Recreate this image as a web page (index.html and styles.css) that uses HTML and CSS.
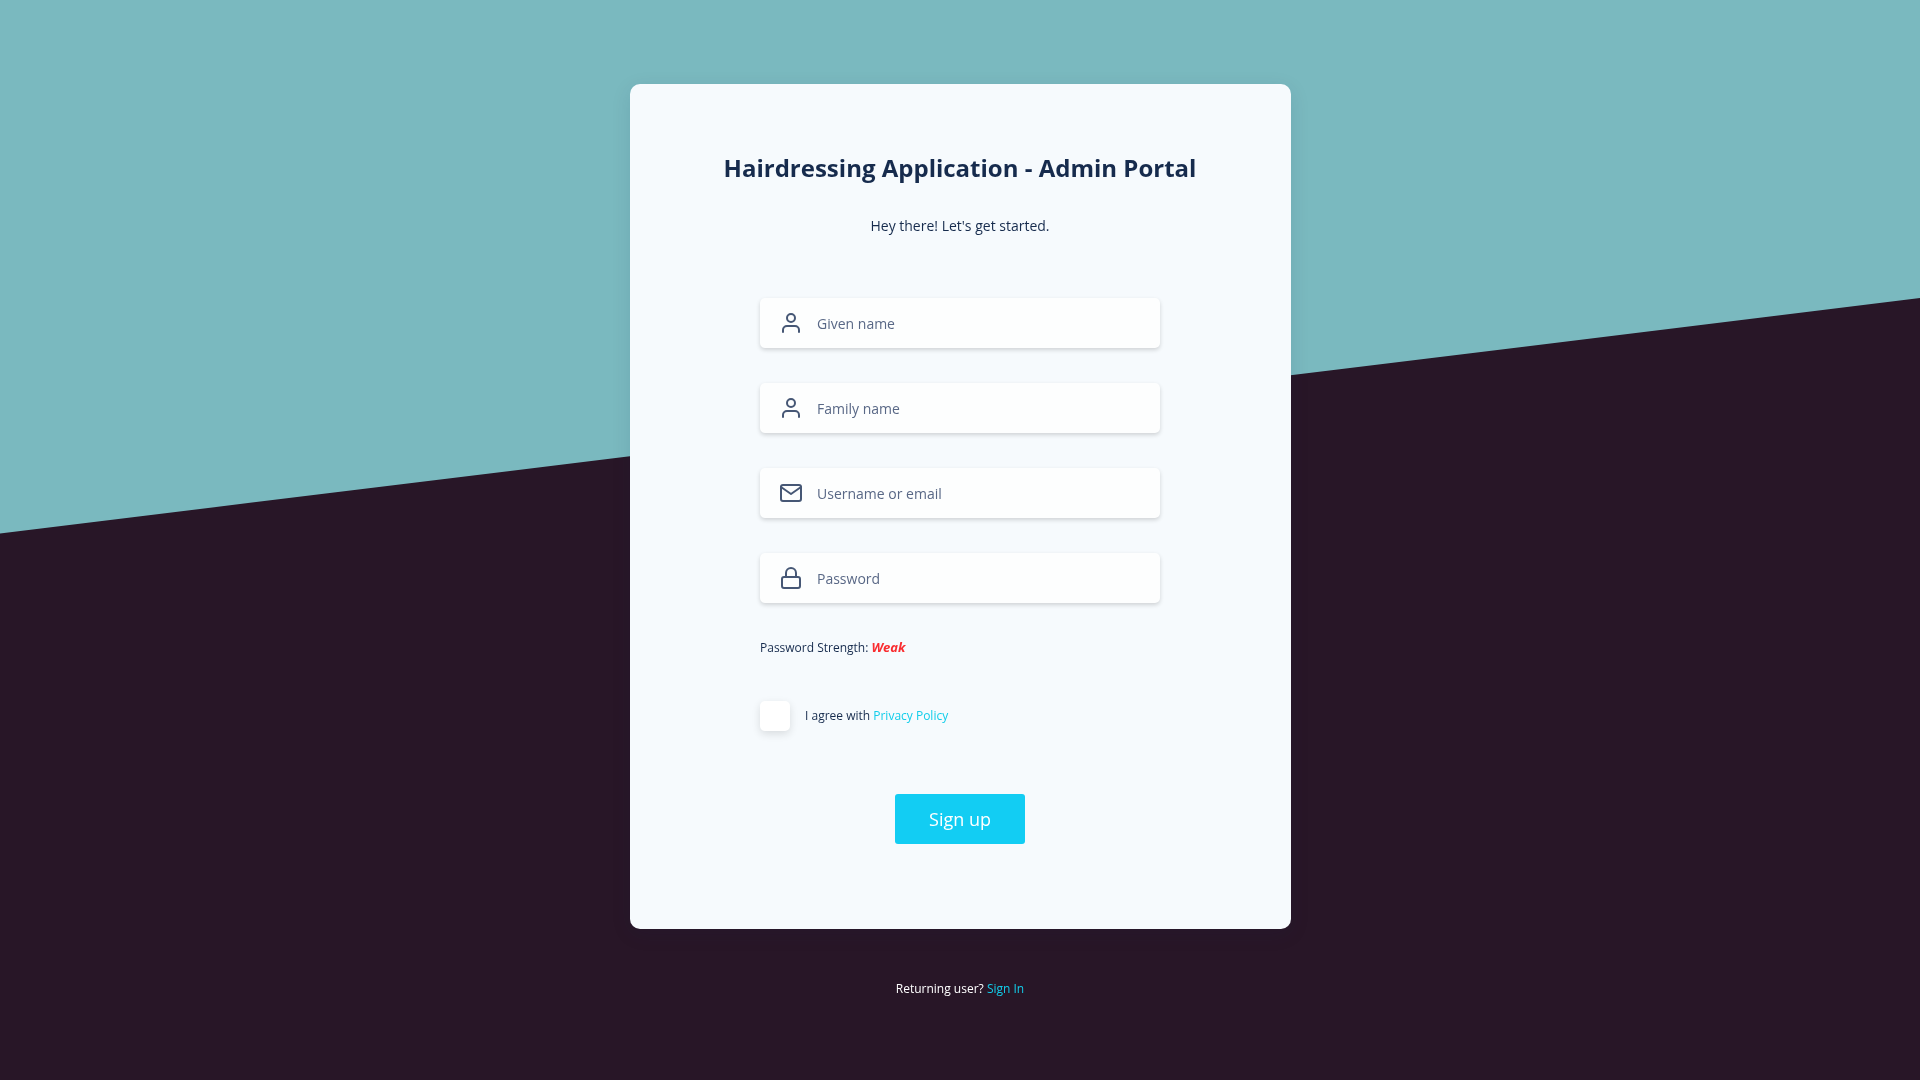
FILE: index.html
```
<!DOCTYPE html>
<html lang="en">
<head>
<meta charset="utf-8">
<meta name="viewport" content="width=device-width, initial-scale=1">
<title>Hairdressing Application - Admin Portal</title>
<link rel="stylesheet" href="styles.css">
</head>
<body>
<main class="page">
  <section class="card">
    <h1 class="title">Hairdressing Application - Admin Portal</h1>
    <p class="intro">Hey there! Let's get started.</p>
    <form class="form">
      <label class="field">
        <svg class="icon" viewBox="0 0 24 24" aria-hidden="true"><path d="M20 21v-2a4 4 0 0 0-4-4H8a4 4 0 0 0-4 4v2"/><circle cx="12" cy="7" r="4"/></svg>
        <input class="input" type="text" placeholder="Given name" aria-label="Given name">
      </label>
      <label class="field">
        <svg class="icon" viewBox="0 0 24 24" aria-hidden="true"><path d="M20 21v-2a4 4 0 0 0-4-4H8a4 4 0 0 0-4 4v2"/><circle cx="12" cy="7" r="4"/></svg>
        <input class="input" type="text" placeholder="Family name" aria-label="Family name">
      </label>
      <label class="field">
        <svg class="icon" viewBox="0 0 24 24" aria-hidden="true"><path d="M4 4h16a2 2 0 0 1 2 2v12a2 2 0 0 1-2 2H4a2 2 0 0 1-2-2V6a2 2 0 0 1 2-2z"/><path d="M22 6l-10 7L2 6"/></svg>
        <input class="input" type="text" placeholder="Username or email" aria-label="Username or email">
      </label>
      <label class="field">
        <svg class="icon" viewBox="0 0 24 24" aria-hidden="true"><rect x="3" y="11" width="18" height="11" rx="2"/><path d="M7 11V7a5 5 0 0 1 10 0v4"/></svg>
        <input class="input" type="password" placeholder="Password" aria-label="Password">
      </label>
      <p class="strength">Password Strength: <em class="weak">Weak</em></p>
      <div class="agree">
        <input class="check" type="checkbox" id="agree">
        <label for="agree">I agree with <a class="link" href="#privacy">Privacy Policy</a></label>
      </div>
      <button class="submit" type="button">Sign up</button>
    </form>
  </section>
  <p class="returning">Returning user? <a class="link" href="#signin">Sign In</a></p>
</main>
</body>
</html>
```
FILE: styles.css
```
* {
  box-sizing: border-box;
}

body {
  margin: 0;
  background: #281627;
  color: #162b4d;
  font-family: "Segoe UI", "Open Sans", "Noto Sans", sans-serif;
  font-size: 12px;
  line-height: 20px;
}

/* slanted upper backdrop */
body::before {
  content: "";
  position: fixed;
  inset: 0;
  z-index: -1;
  background: #7ab9bf;
  clip-path: polygon(0 0, 100% 0, 100% 27.6%, 0 49.4%);
}

h1, p {
  margin: 0;
}

.page {
  min-height: 100vh;
  display: flex;
  flex-direction: column;
  align-items: center;
  padding: 84px 20px;
}

.card {
  width: 100%;
  max-width: 661px;
  padding: 64px 20px 85px;
  display: flex;
  flex-direction: column;
  align-items: center;
  background: #f6fafd;
  border-radius: 10px;
  box-shadow: 0 5px 20px rgba(22, 43, 77, 0.1);
}

.title {
  font-size: 24px;
  line-height: 40px;
  font-weight: 700;
  text-align: center;
}

.intro {
  margin-top: 28px;
  font-size: 14px;
}

.form {
  width: 100%;
  max-width: 400px;
  margin-top: 62px;
  display: flex;
  flex-direction: column;
}

.field {
  display: flex;
  align-items: center;
  gap: 14px;
  height: 50px;
  margin-bottom: 35px;
  padding: 0 19px;
  background: #fdfefe;
  border-radius: 5px;
  box-shadow: 0 2px 4px rgba(0, 0, 0, 0.16);
}

.icon {
  flex: none;
  width: 24px;
  height: 24px;
  fill: none;
  stroke: #465775;
  stroke-width: 2;
  stroke-linecap: round;
  stroke-linejoin: round;
}

.input {
  flex: 1;
  min-width: 0;
  padding: 2px 0 0;
  border: 0;
  outline: 0;
  background: none;
  color: #162b4d;
  font: inherit;
  font-size: 14px;
}

.input::placeholder {
  color: #596886;
  opacity: 1;
}

.weak {
  color: #f92d30;
  font-size: 13px;
  line-height: 16px;
  font-weight: 700;
}

.agree {
  display: flex;
  align-items: center;
  gap: 15px;
  margin-top: 43px;
}

.check {
  appearance: none;
  width: 30px;
  height: 30px;
  margin: 0;
  background: #fff;
  border-radius: 5px;
  box-shadow: 0 3px 8px rgba(0, 0, 0, 0.12);
}

.check:checked {
  background: #12cdf3;
}

.link {
  color: #12cdea;
  text-decoration: none;
}

.submit {
  align-self: center;
  width: 130px;
  height: 50px;
  margin-top: 63px;
  border: 0;
  border-radius: 3px;
  background: #12cdf3;
  color: #fff;
  font: inherit;
  font-size: 18px;
}

.returning {
  margin-top: 50px;
  color: #fff;
}
```
